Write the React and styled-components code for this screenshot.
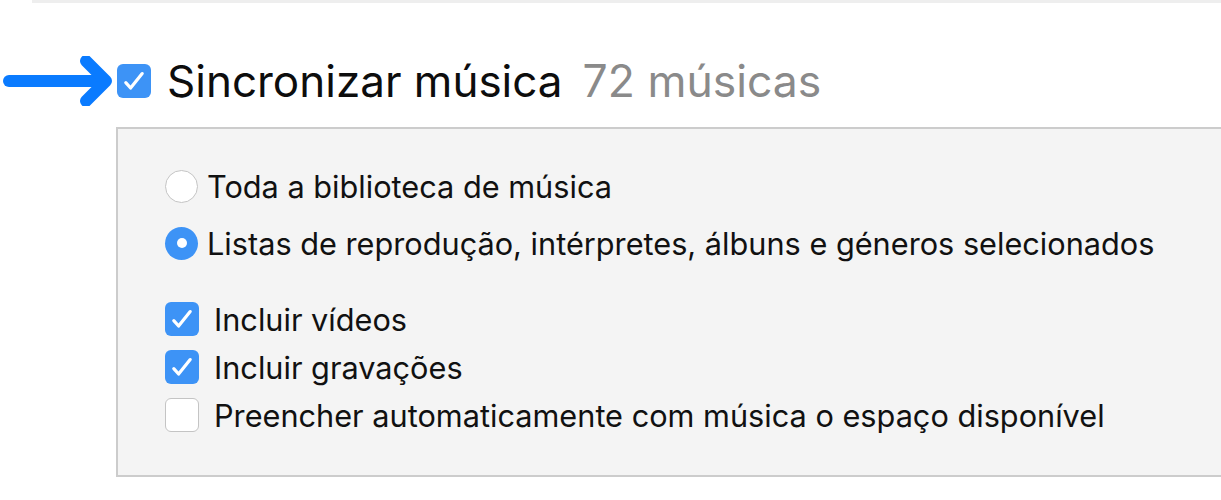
import React from 'react';
import styled, { createGlobalStyle } from 'styled-components';

const GlobalStyle = createGlobalStyle`
  html, body {
    margin: 0;
    padding: 0;
    background: #ffffff;
  }
  body {
    font-family: Inter, "Liberation Sans", Arial, sans-serif;
    color: #111111;
  }
`;

const Page = styled.div`
  width: 1221px;
  height: 500px;
  overflow: hidden;
`;

const TopRule = styled.div`
  margin-left: 32px;
  height: 3px;
  background: #eeeeee;
`;

const Header = styled.div`
  display: flex;
  align-items: center;
  height: 50px;
  margin-top: 53px;
`;

const Arrow = styled.svg`
  width: 117px;
  height: 50px;
  flex-shrink: 0;
`;

const Title = styled.h1`
  margin: 0 0 0 16px;
  font-size: 44px;
  font-weight: 400;
  color: #0d0d0d;
  white-space: nowrap;
`;

const Count = styled.span`
  margin-left: 20px;
  font-size: 44.5px;
  color: #8a8a8a;
`;

const Panel = styled.div`
  margin-left: 116px;
  margin-top: 21px;
  height: 350px;
  background: #f4f4f4;
  border: 2px solid #cccccc;
  border-right: none;
  padding: 40px 0 0 47px;
  box-sizing: border-box;
`;

const RadioGroup = styled.div`
  display: flex;
  flex-direction: column;
  gap: 23px;
`;

const CheckGroup = styled.div`
  display: flex;
  flex-direction: column;
  gap: 14px;
  margin-top: 42px;
`;

const Row = styled.label`
  display: flex;
  align-items: center;
  height: 34px;
  gap: ${p => p.$gap}px;
  font-size: 30.7px;
  color: #111111;
  white-space: nowrap;
`;

const Radio = styled.span`
  width: 33px;
  height: 33px;
  border-radius: 50%;
  box-sizing: border-box;
  flex-shrink: 0;
  display: flex;
  align-items: center;
  justify-content: center;
  background: ${p => (p.$on ? '#3d93f6' : '#ffffff')};
  border: ${p => (p.$on ? 'none' : '1.5px solid #c4c4c4')};
  &::after {
    content: '';
    display: ${p => (p.$on ? 'block' : 'none')};
    width: 10px;
    height: 10px;
    border-radius: 50%;
    background: #ffffff;
  }
`;

const Box = styled.span`
  width: 34px;
  height: 34px;
  border-radius: 6px;
  box-sizing: border-box;
  flex-shrink: 0;
  display: flex;
  align-items: center;
  justify-content: center;
  background: ${p => (p.$on ? '#3d93f6' : '#ffffff')};
  border: ${p => (p.$on ? 'none' : '1.5px solid #c4c4c4')};
`;

const Tick = () => (
  <svg width="34" height="34" viewBox="0 0 34 34">
    <path d="M8.8 18.6 L13.6 24 L25.2 9.6" fill="none" stroke="#ffffff" strokeWidth="3.2" strokeLinecap="round" strokeLinejoin="round" />
  </svg>
);

const CheckBox = ({ on }) => <Box $on={on}>{on && <Tick />}</Box>;

const radios = [
  { label: 'Toda a biblioteca de música', on: false },
  { label: 'Listas de reprodução, intérpretes, álbuns e géneros selecionados', on: true },
];

const checks = [
  { label: 'Incluir vídeos', on: true },
  { label: 'Incluir gravações', on: true },
  { label: 'Preencher automaticamente com música o espaço disponível', on: false },
];

export default function App() {
  return (
    <Page>
      <GlobalStyle />
      <TopRule />
      <Header>
        <Arrow viewBox="0 0 117 50">
          <g fill="none" stroke="#0a7bff" strokeWidth="12" strokeLinecap="round" strokeLinejoin="round">
            <path d="M9 25 L100 25" />
            <path d="M86 5 L106 25 L86 45" />
          </g>
        </Arrow>
        <CheckBox on />
        <Title>
          Sincronizar música<Count>72 músicas</Count>
        </Title>
      </Header>
      <Panel>
        <RadioGroup>
          {radios.map(r => (
            <Row key={r.label} $gap={9}>
              <Radio $on={r.on} />
              {r.label}
            </Row>
          ))}
        </RadioGroup>
        <CheckGroup>
          {checks.map(c => (
            <Row key={c.label} $gap={15}>
              <CheckBox on={c.on} />
              {c.label}
            </Row>
          ))}
        </CheckGroup>
      </Panel>
    </Page>
  );
}
